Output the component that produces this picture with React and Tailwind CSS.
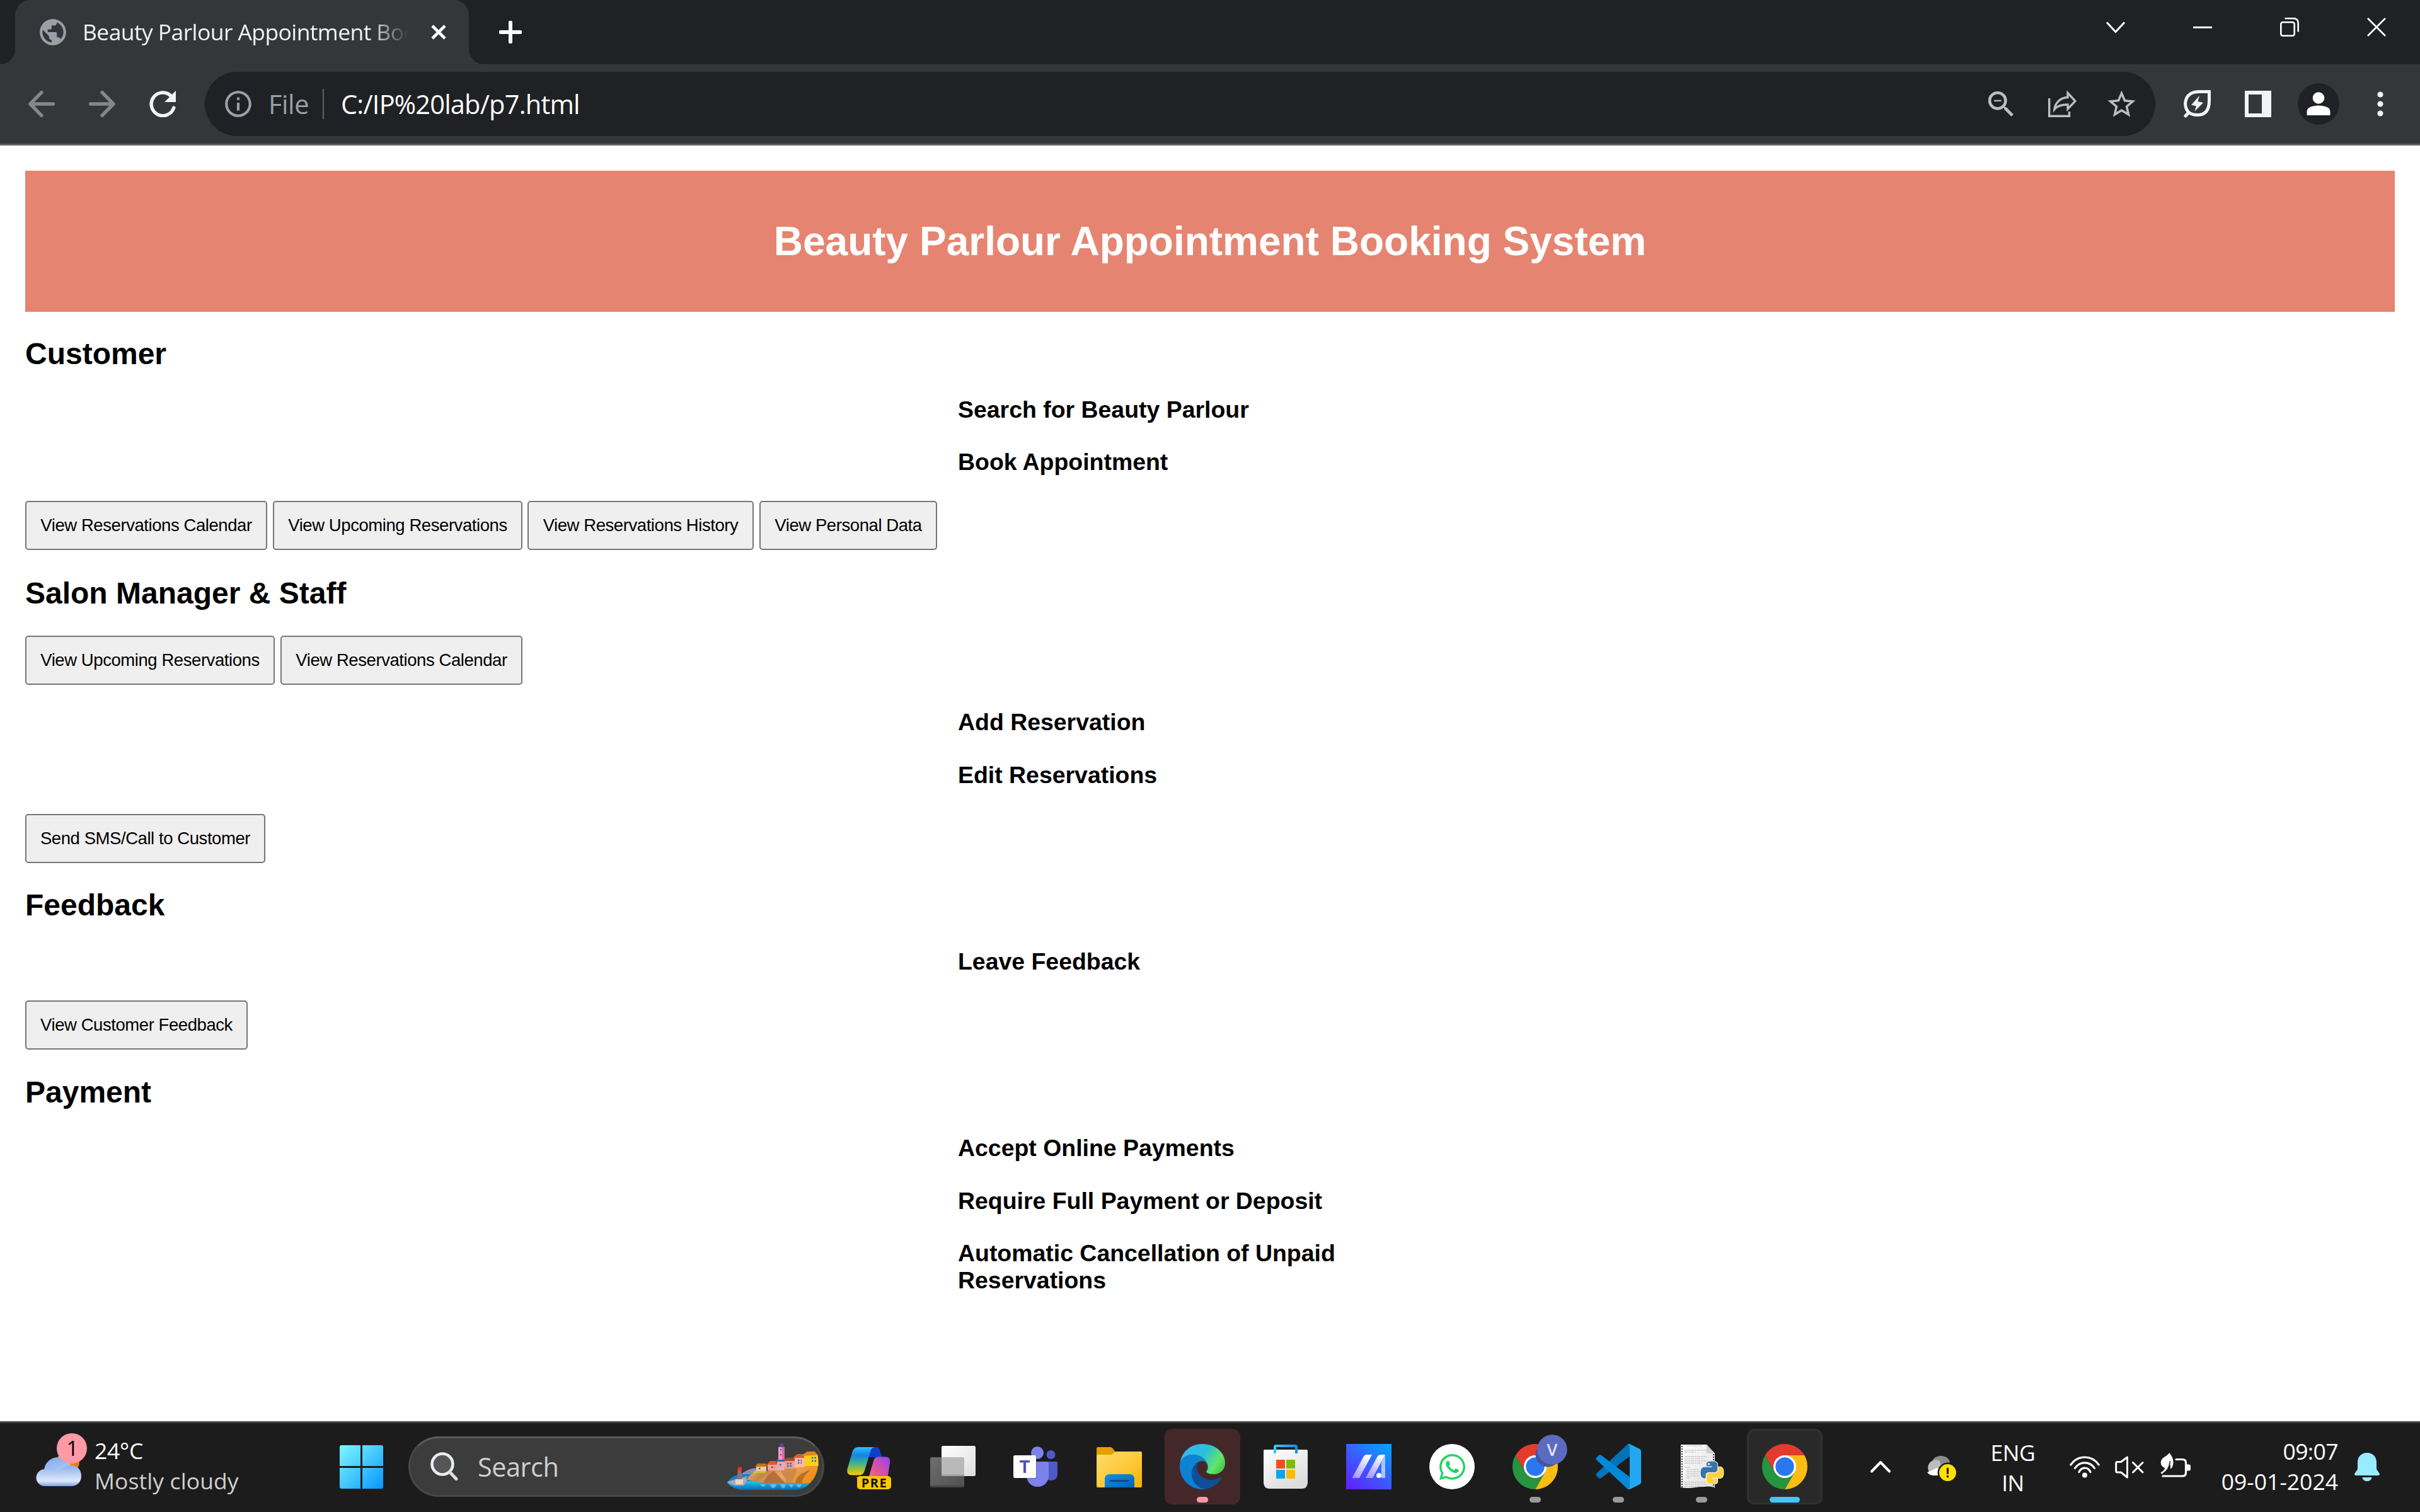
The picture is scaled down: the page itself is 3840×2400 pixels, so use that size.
import React from "react";
import {
  MdPublic,
  MdInfoOutline,
  MdZoomOut,
  MdStarOutline,
} from "react-icons/md";
import { FaWhatsapp } from "react-icons/fa";

/* ---------- Browser chrome ---------- */

function TabStrip() {
  return (
    <div className="flex h-[102px] w-full shrink-0 bg-[#202124]">
      <div className="flex w-[24px] items-end bg-[#202124]">
        <div className="h-[24px] w-[24px] bg-[#35363a]">
          <div className="h-full w-full rounded-br-[24px] bg-[#202124]" />
        </div>
      </div>
      <div className="flex h-full w-[720px] items-center rounded-t-[24px] bg-[#35363a]">
        <MdPublic className="ml-[35px] shrink-0 text-[#9aa0a6]" size={50} />
        <div className="-mt-[2px] ml-[22px] w-[517px] overflow-hidden whitespace-nowrap text-[35.5px] leading-[48px] tracking-[-0.6px] text-[#f1f3f4] [mask-image:linear-gradient(to_right,#000_88%,transparent_100%)]">
          Beauty Parlour Appointment Booking
        </div>
        <svg className="ml-[35px] shrink-0" width="26" height="26" viewBox="0 0 26 26">
          <path d="M3 3L23 23M23 3L3 23" stroke="#fff" strokeWidth="4.6" strokeLinecap="butt" />
        </svg>
      </div>
      <div className="flex w-[24px] items-end">
        <div className="h-[24px] w-[24px] bg-[#35363a]">
          <div className="h-full w-full rounded-bl-[24px] bg-[#202124]" />
        </div>
      </div>
      <div className="flex flex-1 items-center">
        <svg className="ml-[24px]" width="36" height="36" viewBox="0 0 36 36">
          <path d="M18 2.5V33.500M2.500 18H33.500" stroke="#fff" strokeWidth="6" strokeLinecap="round" />
        </svg>
      </div>
      <div className="flex items-start gap-[108px] pr-[54px] pt-[28px]">
        <svg width="30" height="30" viewBox="0 0 30 30" fill="none" stroke="#fff" strokeWidth="3">
          <path d="M1 7.500L15 22.500L29 7.500" />
        </svg>
        <svg width="30" height="30" viewBox="0 0 30 30">
          <path d="M0 15.500H30" stroke="#fff" strokeWidth="3" />
        </svg>
        <svg width="30" height="30" viewBox="0 0 30 30" fill="none" stroke="#fff" strokeWidth="2.600">
          <rect x="1.300" y="7.300" width="21.400" height="21.400" rx="3" />
          <path d="M7.500 1.300H21C26 1.300 28.700 4 28.700 9V22.500" />
        </svg>
        <svg width="30" height="30" viewBox="0 0 30 30">
          <path d="M1 1L29 29M29 1L1 29" stroke="#fff" strokeWidth="2.600" />
        </svg>
      </div>
    </div>
  );
}

function Toolbar() {
  return (
    <div className="flex h-[129px] w-full shrink-0 items-center border-b-[3px] border-[#5f6064] bg-[#35363a]">
      <svg className="ml-[45px] shrink-0" width="42" height="42" viewBox="0 0 42 42" fill="none" stroke="#86878a" strokeWidth="5.400" strokeLinecap="round" strokeLinejoin="round">
        <path d="M39.500 21H4M21 2.700L3 21L21 39.300" />
      </svg>
      <svg className="ml-[54px] shrink-0" width="42" height="42" viewBox="0 0 42 42" fill="none" stroke="#86878a" strokeWidth="5.400" strokeLinecap="round" strokeLinejoin="round">
        <path d="M2.500 21H38M21 2.700L39 21L21 39.300" />
      </svg>
      <svg className="ml-[54px] shrink-0" width="42" height="42" viewBox="0 0 42 42">
        <path d="M38.800 27A18.300 18.300 0 1 1 34.500 8.500" fill="none" stroke="#f1f3f4" strokeWidth="5.400" strokeLinecap="round" />
        <path d="M42 0V18H24Z" fill="#f1f3f4" />
      </svg>
      <div className="ml-[46px] flex h-[102px] w-[3095px] shrink-0 items-center rounded-full bg-[#202124]">
        <MdInfoOutline className="ml-[28px] shrink-0 text-[#9aa0a6]" size={50} />
        <div className="-mt-[1px] ml-[23px] w-[86px] whitespace-nowrap text-[41.5px] leading-[56px] tracking-[-0.4px] text-[#9aa0a6]">File</div>
        <div className="h-[48px] w-[2px] bg-[#5f6368]" />
        <div className="-mt-[1px] ml-[27px] whitespace-nowrap text-[41.5px] leading-[56px] tracking-[-0.8px] text-white">C:/IP%20lab/p7.html</div>
        <div className="ml-auto flex items-center pr-[27px] text-[#bdbdbd]">
          <MdZoomOut size={55} />
          <svg className="ml-[47px]" width="45" height="42" viewBox="0 0 45 42" fill="none" stroke="#bdbdbd" strokeWidth="3.400">
            <path d="M1.700 12V40.300H33.500V33" />
            <path d="M31 3.500L43 16.500L31 29V22C22 22 14 24.500 10 29.500C11 19.500 19 11 31 10.500Z" />
          </svg>
          <MdStarOutline className="ml-[45px]" size={53} />
        </div>
      </div>
      <svg className="ml-[45px] shrink-0" width="44" height="44" viewBox="0 0 44 44" fill="none">
        <path d="M3 41L8 35.500M8 35.500C3 30 2 24 3 18C5 7 14 2.600 25 2.600H40.500V17C40.500 28 37 39.500 22 39.500C16 39.500 11.500 38 8 35.500Z" stroke="#f1f3f4" strokeWidth="5" strokeLinecap="round" />
        <path d="M25 9L12 23.500L20 25.500L17.500 33.500L31 20L22.500 18Z" fill="#f1f3f4" />
      </svg>
      <svg className="ml-[53px] shrink-0" width="42" height="42" viewBox="0 0 42 42">
        <path fillRule="evenodd" d="M0 0H42V42H0ZM6 6V36H27V6Z" fill="#f1f3f4" />
      </svg>
      <div className="ml-[42px] flex h-[66px] w-[66px] shrink-0 items-center justify-center rounded-full bg-[#202124]">
        <svg width="38" height="38" viewBox="0 0 38 38" fill="#fff">
          <circle cx="19" cy="9.500" r="9.300" />
          <path d="M0.500 37V31C0.500 25 8 21.500 19 21.500S37.500 25 37.500 31V37Z" />
        </svg>
      </div>
      <svg className="ml-[60px] shrink-0" width="10" height="40" viewBox="0 0 10 40" fill="#f1f3f4">
        <circle cx="5" cy="5" r="4.600" />
        <circle cx="5" cy="20" r="4.600" />
        <circle cx="5" cy="35" r="4.600" />
      </svg>
    </div>
  );
}

/* ---------- Page ---------- */

function PageButton({ children, className }) {
  return (
    <button
      className={
        "flex h-[78px] shrink-0 items-center justify-center whitespace-nowrap rounded-[5px] border-2 border-[#767676] bg-[#efefef] pb-[1px] text-[27.5px] leading-[30px] tracking-[-0.43px] text-black " +
        className
      }
    >
      {children}
    </button>
  );
}

function Heading({ children, className }) {
  return <h2 className={"text-[48px] font-bold leading-[55px] text-black " + className}>{children}</h2>;
}

function Option({ children, className }) {
  return (
    <h3 className={"mx-auto w-[800px] text-[37.44px] font-bold leading-[43px] text-black " + className}>
      {children}
    </h3>
  );
}

function Page() {
  return (
    <main className="flex h-[2025px] w-full shrink-0 flex-col bg-white px-[40px] pt-[40px] font-['Liberation_Sans',Arial,sans-serif]">
      <header className="flex h-[224px] shrink-0 items-center justify-center bg-[#e58571]">
        <h1 className="text-[64px] font-bold leading-[74px] text-white">Beauty Parlour Appointment Booking System</h1>
      </header>

      <Heading className="mt-[39px]">Customer</Heading>
      <Option className="mt-[40px]">Search for Beauty Parlour</Option>
      <Option className="mt-[40px]">Book Appointment</Option>
      <div className="mt-[40px] flex">
        <PageButton className="w-[384px]">View Reservations Calendar</PageButton>
        <PageButton className="ml-[9px] w-[396px]">View Upcoming Reservations</PageButton>
        <PageButton className="ml-[8px] w-[359px]">View Reservations History</PageButton>
        <PageButton className="ml-[9px] w-[282px]">View Personal Data</PageButton>
      </div>

      <Heading className="mt-[41px]">Salon Manager &amp; Staff</Heading>
      <div className="mt-[40px] flex">
        <PageButton className="w-[396px]">View Upcoming Reservations</PageButton>
        <PageButton className="ml-[9px] w-[384px]">View Reservations Calendar</PageButton>
      </div>
      <Option className="mt-[38px]">Add Reservation</Option>
      <Option className="mt-[41px]">Edit Reservations</Option>
      <div className="mt-[40px] flex">
        <PageButton className="w-[381px]">Send SMS/Call to Customer</PageButton>
      </div>

      <Heading className="mt-[39px]">Feedback</Heading>
      <Option className="mt-[41px]">Leave Feedback</Option>
      <div className="mt-[40px] flex">
        <PageButton className="w-[353px]">View Customer Feedback</PageButton>
      </div>

      <Heading className="mt-[40px]">Payment</Heading>
      <Option className="mt-[40px]">Accept Online Payments</Option>
      <Option className="mt-[41px]">Require Full Payment or Deposit</Option>
      <Option className="mt-[40px]">Automatic Cancellation of Unpaid Reservations</Option>
    </main>
  );
}

/* ---------- Taskbar icons, each on a 72 x 72 grid ---------- */

function Icon72({ children }) {
  return (
    <svg className="block overflow-visible" width="72" height="72" viewBox="0 0 72 72">
      {children}
    </svg>
  );
}

function CopilotIcon() {
  return (
    <Icon72>
      <defs>
        <linearGradient id="cpA" x1="0" y1="0" x2="0" y2="1">
          <stop offset="0" stopColor="#2fc0fb" />
          <stop offset="0.3" stopColor="#1683e0" />
          <stop offset="0.58" stopColor="#3fb48c" />
          <stop offset="0.8" stopColor="#a3bf33" />
          <stop offset="1" stopColor="#ffc80a" />
        </linearGradient>
        <linearGradient id="cpB" x1="1" y1="0" x2="0" y2="1">
          <stop offset="0" stopColor="#9045f5" />
          <stop offset="0.5" stopColor="#e0529c" />
          <stop offset="1" stopColor="#ff8a5c" />
        </linearGradient>
      </defs>
      <path d="M38 5H46C50 5 51.500 7 52.500 11L54 16C55 19 56 20.500 58 21H34Z" fill="#0f3fc9" />
      <path d="M12 52.500C16 52.500 17.500 55 19 60C21 65 24 66 30 66H36L38 52.500Z" fill="#ff6a4d" />
      <path d="M50 20.500H62C67 20.500 69 25 68 30L64 56C62 62 60 66 54 66H30L36 48L42 27C43 22.500 46 20.500 50 20.500Z" fill="url(#cpB)" />
      <path d="M18 5H45C40 5 38 8 36.500 14L28 42C26.500 47 24 49.500 19 49.500H8C1 49.500 -1 45 1 38L8 14C10 8 13 5 18 5Z" fill="url(#cpA)" />
      <rect x="16" y="51" width="54" height="21" rx="5" fill="#ffc700" />
      <text x="43.500" y="68.500" textAnchor="middle" fontFamily="'Open Sans', sans-serif" fontWeight="700" fontSize="20" letterSpacing="1.500" fill="#111">PRE</text>
    </Icon72>
  );
}

function TaskViewIcon() {
  return (
    <Icon72>
      <defs>
        <linearGradient id="tvA" x1="0" y1="0" x2="1" y2="1">
          <stop offset="0" stopColor="#ffffff" />
          <stop offset="1" stopColor="#dddddd" />
        </linearGradient>
        <linearGradient id="tvB" x1="0" y1="0" x2="1" y2="1">
          <stop offset="0" stopColor="#6e6e6e" />
          <stop offset="1" stopColor="#505050" />
        </linearGradient>
      </defs>
      <rect x="0" y="21" width="54" height="48" rx="2.500" fill="url(#tvB)" />
      <rect x="18" y="3" width="54" height="48" rx="2.500" fill="url(#tvA)" />
      <path d="M18 21H52Q54 21 54 23V51H20Q18 51 18 49Z" fill="#b9b9b9" />
      <path d="M18 48H54V51H20Q18 51 18 48Z" fill="#a6a6a6" />
      <path d="M0 66H54Q54 69 52 69H2Q0 69 0 66Z" fill="#454545" />
    </Icon72>
  );
}

function TeamsIcon() {
  return (
    <Icon72>
      <circle cx="59.500" cy="17" r="7" fill="#5059c9" />
      <path d="M50 28H68Q70 28 70 30V48C70 54 66 58 60 58C55 58 50 55 50 48Z" fill="#5059c9" />
      <circle cx="38" cy="14" r="10" fill="#7b83eb" />
      <path d="M21 28H54Q56 28 56 30V50C56 61 48 68 38.500 68C29 68 21 61 21 50Z" fill="#7b83eb" />
      <rect x="1" y="19" width="36" height="36" rx="2.500" fill="#2f3270" opacity="0.4" />
      <rect x="0" y="18" width="36" height="36" rx="2.500" fill="#fff" />
      <path d="M10 26H26V29.500H20V46H16V29.500H10Z" fill="#4b53bc" />
    </Icon72>
  );
}

function FolderIcon() {
  return (
    <Icon72>
      <defs>
        <linearGradient id="foA" x1="0" y1="0" x2="1" y2="1">
          <stop offset="0" stopColor="#ffdb6b" />
          <stop offset="0.6" stopColor="#fdc735" />
          <stop offset="1" stopColor="#f2b200" />
        </linearGradient>
        <linearGradient id="foB" x1="0" y1="0" x2="1" y2="1">
          <stop offset="0" stopColor="#1590e0" />
          <stop offset="1" stopColor="#0063b8" />
        </linearGradient>
      </defs>
      <path d="M2 5H22C24 5 26 7 30 13V24H0V7Q0 5 2 5Z" fill="#e0a000" />
      <path d="M0 19Q0 17 2 17H23C26 17 28 12 31 12H70Q72 12 72 14V67Q72 69 70 69H2Q0 69 0 67Z" fill="url(#foA)" />
      <path d="M13 69V56Q13 48 21 48H52Q60 48 60 56V69Z" fill="url(#foB)" />
      <path d="M22 58.500H50" stroke="#064a8c" strokeWidth="3" strokeLinecap="round" />
    </Icon72>
  );
}

function EdgeIcon() {
  return (
    <Icon72>
      <defs>
        <linearGradient id="edA" x1="0" y1="0.3" x2="1" y2="0.75">
          <stop offset="0" stopColor="#38b8fb" />
          <stop offset="0.45" stopColor="#28bfd8" />
          <stop offset="0.8" stopColor="#62e56c" />
          <stop offset="1" stopColor="#44c648" />
        </linearGradient>
        <linearGradient id="edB" x1="0.7" y1="0" x2="0.2" y2="1">
          <stop offset="0" stopColor="#0f86cf" />
          <stop offset="1" stopColor="#0a7edb" />
        </linearGradient>
        <linearGradient id="edC" x1="0" y1="0" x2="1" y2="1">
          <stop offset="0" stopColor="#0c4f9e" />
          <stop offset="1" stopColor="#0f4f92" />
        </linearGradient>
      </defs>
      <path d="M0.300 32C2 13 17 0 36 0C57 0 72 14 72 30C72 41 64 48 54 48C45 48 41 45 42.500 43C45 40 45 37 44 33C42 24 33 17 20 17C9 17 1.500 24 0.300 32Z" fill="url(#edA)" />
      <path d="M0 36C0 24 9 17 20 17C33 17 42 24 44 34C42 29 39 27 36 27C28 27 19 35 19 46C19 60 29 70.500 41 71.700A36 36 0 0 1 0 36Z" fill="url(#edB)" />
      <path d="M30 28.500C23 32 19 39 19 46C19 60 29 70.500 41 71.700C52 70 62 62 66.500 54C67 52.500 66 52 65 52.700C61 55.500 56 57 50 57C37 57 27 48 27 37.500C27 34 28 31 30 28.500Z" fill="url(#edC)" />
    </Icon72>
  );
}

function StoreIcon() {
  return (
    <Icon72>
      <defs>
        <linearGradient id="stA" x1="0" y1="0" x2="0.6" y2="1">
          <stop offset="0" stopColor="#ffffff" />
          <stop offset="1" stopColor="#dcdcdc" />
        </linearGradient>
        <linearGradient id="stB" x1="0" y1="0" x2="1" y2="0">
          <stop offset="0" stopColor="#35c7f5" />
          <stop offset="1" stopColor="#1391e0" />
        </linearGradient>
      </defs>
      <path d="M1 11Q1 9 3 9H69Q71 9 71 11V61Q71 71 61 71H11Q1 71 1 61Z" fill="url(#stA)" />
      <path d="M19 15V5Q19 3 21 3H51Q53 3 53 5V15" fill="none" stroke="url(#stB)" strokeWidth="4.200" />
      <rect x="21" y="25" width="14" height="14" fill="#f34f1c" />
      <rect x="37" y="25" width="14" height="14" fill="#7fbc00" />
      <rect x="21" y="41" width="14" height="14" fill="#01a6f0" />
      <rect x="37" y="41" width="14" height="14" fill="#ffba01" />
    </Icon72>
  );
}

function MyAsusIcon() {
  return (
    <Icon72>
      <defs>
        <linearGradient id="asA" x1="0.1" y1="1" x2="0.9" y2="0">
          <stop offset="0" stopColor="#6120ff" />
          <stop offset="0.5" stopColor="#3a5dff" />
          <stop offset="1" stopColor="#05a3ff" />
        </linearGradient>
        <linearGradient id="asB" x1="0.7" y1="0" x2="0.3" y2="1">
          <stop offset="0" stopColor="#ffffff" />
          <stop offset="1" stopColor="#a99bff" />
        </linearGradient>
      </defs>
      <rect width="72" height="72" fill="url(#asA)" />
      <path d="M32 17H41L21 54H9.500L28 19.500Q29.500 17 32 17Z" fill="url(#asB)" />
      <path d="M55 17H62L42 54H31L50 19.500Q51.500 17 55 17Z" fill="url(#asB)" />
      <path d="M62 17V54H56V29Z" fill="#a9c3ff" />
      <circle cx="52" cy="50" r="4" fill="#fff" />
    </Icon72>
  );
}

function WhatsAppIcon() {
  return (
    <div className="flex h-[72px] w-[72px] items-center justify-center rounded-full bg-white">
      <FaWhatsapp size={47} className="text-[#25d366]" />
    </div>
  );
}

function ChromeShapes() {
  return (
    <>
      <path d="M20.410 45L4.820 18A36 36 0 0 1 67.180 18H36Z" fill="#e33b2e" />
      <path d="M36 18H67.180A36 36 0 0 1 36 72L51.590 45Z" fill="#fbbc14" />
      <path d="M51.590 45L36 72A36 36 0 0 1 4.820 18L20.410 45Z" fill="#26953f" />
      <circle cx="36" cy="36" r="18" fill="#fff" />
      <circle cx="36" cy="36" r="14.700" fill="#2b78ee" />
    </>
  );
}

function ChromeIcon() {
  return (
    <Icon72>
      <ChromeShapes />
    </Icon72>
  );
}

function ChromeProfileIcon() {
  return (
    <Icon72>
      <ChromeShapes />
      <circle cx="56" cy="17" r="19.500" fill="#4453a5" />
      <circle cx="63" cy="9" r="23.800" fill="#5c6bc0" />
      <text x="63" y="19" textAnchor="middle" fontFamily="'Open Sans', sans-serif" fontWeight="600" fontSize="27" fill="#dfe3f5">V</text>
    </Icon72>
  );
}

function VsCodeIcon() {
  return (
    <Icon72>
      <path d="M1.500 46.500Q-1 49 1.500 51L5 54.200Q6.800 55.500 9 54L54 19.500V1L50 1Z" fill="#0273b8" />
      <path d="M1.500 21.500L5 18Q6.800 16.500 9 18L54 52.500V71L50 71L1.500 25.500Q-1 23.500 1.500 21.500Z" fill="#0588d8" />
      <path d="M50 71C52 72.500 54 72 56 71L70 64Q72 63 72 60.500V11.500Q72 9 70 8L56 1C54 0 52 -0.500 50 1C52 0.800 54 2 54 4V68C54 70 52 71.500 50 71Z" fill="#24a7f2" />
    </Icon72>
  );
}

const PY_HALF =
  "M14.25.18l.9.2.73.26.59.3.45.32.34.34.25.34.16.33.1.3.04.26.02.2-.01.13V8.500l-.05.63-.13.55-.21.46-.26.38-.3.31-.33.25-.35.19-.35.14-.33.1-.3.07-.26.04-.21.02H8.770l-.69.05-.59.14-.5.22-.41.27-.33.32-.27.35-.2.36-.15.37-.1.35-.07.32-.04.27-.02.21v3.060H3.170l-.21-.03-.28-.07-.32-.12-.35-.18-.36-.26-.36-.36-.35-.46-.32-.59-.28-.73-.21-.88-.14-1.050-.05-1.230.06-1.220.16-1.040.24-.87.32-.71.36-.57.4-.44.42-.33.42-.24.4-.16.36-.1.32-.05.24-.01h.16l.06.01h8.160v-.83H6.180l-.01-2.750-.02-.37.05-.34.11-.31.17-.28.25-.26.31-.23.38-.2.44-.18.51-.15.58-.12.64-.1.71-.06.77-.04.84-.02 1.270.05zm-6.300 1.980l-.23.33-.08.41.08.41.23.34.33.22.41.09.41-.09.33-.22.23-.34.08-.41-.08-.41-.23-.33-.33-.22-.41-.09-.41.09z";

function PythonFileIcon() {
  const lines = [
    [10, 3, 24], [6, 10, 36], [6, 13, 18], [6, 20, 36], [6, 23.500, 31], [6, 27, 38], [6, 30.500, 28],
    [6, 37, 10], [9, 40.500, 20], [9, 44, 22], [9, 47.500, 20], [9, 51, 21], [9, 54, 6],
    [6, 60.500, 38], [6, 64, 42], [6, 67.500, 30],
  ];
  return (
    <Icon72>
      <defs>
        <linearGradient id="pyP" x1="0" y1="0" x2="1" y2="1">
          <stop offset="0" stopColor="#ffffff" />
          <stop offset="1" stopColor="#dedede" />
        </linearGradient>
      </defs>
      <path d="M3 1H44L57 15V70C50 66 44 68 36 68C26 68 18 72 3 69Z" fill="url(#pyP)" />
      <path d="M44 1L57 15H46Q44 15 44 13Z" fill="#cfcfcf" />
      <path d="M5 3V69M55 16V69" stroke="#3c3c3c" strokeWidth="2" strokeDasharray="2 2" />
      {lines.map(([x, y, w], i) => (
        <path key={i} d={`M${x + 3} ${y}h${w}`} stroke="#cacaca" strokeWidth="1.500" strokeDasharray="5 1 3 1" />
      ))}
      <g transform="translate(34.500 27.500) scale(1.500)">
        <path d={PY_HALF} fill="#fff" stroke="#fff" strokeWidth="1.200" />
        <path d={PY_HALF} fill="#fff" stroke="#fff" strokeWidth="1.200" transform="rotate(180 12 12)" />
        <path d={PY_HALF} fill="#3a74a6" />
        <path d={PY_HALF} fill="#ffd03f" transform="rotate(180 12 12)" />
      </g>
    </Icon72>
  );
}

function WeatherIcon() {
  return (
    <svg className="block overflow-visible" width="84" height="84" viewBox="0 0 84 84">
      <defs>
        <linearGradient id="wcA" x1="0" y1="0" x2="0.3" y2="1">
          <stop offset="0" stopColor="#7ea6ef" />
          <stop offset="1" stopColor="#cbdcf6" />
        </linearGradient>
        <linearGradient id="wcB" x1="0" y1="0" x2="0" y2="1">
          <stop offset="0" stopColor="#8db0ee" />
          <stop offset="0.75" stopColor="#dce9fb" />
          <stop offset="1" stopColor="#7e9fe0" />
        </linearGradient>
        <linearGradient id="wcS" x1="0" y1="0" x2="1" y2="1">
          <stop offset="0" stopColor="#ffd21f" />
          <stop offset="1" stopColor="#ea5a0c" />
        </linearGradient>
      </defs>
      <circle cx="51" cy="46" r="18" fill="url(#wcS)" />
      <circle cx="35" cy="60" r="22" fill="url(#wcA)" />
      <path d="M14 84A13.500 13.500 0 0 1 14 57C21 55 30 58 34 65C38 58 44 51 55 51C66 51 72 58 72 67.500C72 77 66 84 56 84Z" fill="url(#wcB)" />
      <circle cx="57" cy="24" r="24" fill="#ff99a4" />
      <text x="58" y="36" textAnchor="middle" fontFamily="'Open Sans', sans-serif" fontSize="33" fill="#000">1</text>
    </svg>
  );
}

function StartIcon() {
  return (
    <svg className="block" width="69" height="69" viewBox="0 0 69 69">
      <defs>
        <linearGradient id="wiA" gradientUnits="userSpaceOnUse" x1="0" y1="0" x2="69" y2="69">
          <stop offset="0" stopColor="#7df8ff" />
          <stop offset="0.5" stopColor="#45c8ff" />
          <stop offset="1" stopColor="#0894ff" />
        </linearGradient>
      </defs>
      <path d="M3 0H33V33H0V3Q0 0 3 0ZM36 0H66Q69 0 69 3V33H36ZM0 36H33V69H3Q0 69 0 66ZM36 36H69V66Q69 69 66 69H36Z" fill="url(#wiA)" />
    </svg>
  );
}

function HarbourArt() {
  return (
    <svg className="block overflow-visible" width="145" height="74" viewBox="0 0 145 74">
      <defs>
        <clipPath id="hbClip">
          <path d="M0 62C6 52 16 40 30 30L60 0H120L143 14C146 30 145 50 132 62C126 70 118 74 106 74H28C14 74 4 68 0 62Z" />
        </clipPath>
        <linearGradient id="hbSea" x1="0" y1="0" x2="0" y2="1">
          <stop offset="0" stopColor="#25cbe6" />
          <stop offset="1" stopColor="#0568b8" />
        </linearGradient>
        <linearGradient id="hbRock" x1="0" y1="0" x2="1" y2="0.3">
          <stop offset="0" stopColor="#f8d29c" />
          <stop offset="0.35" stopColor="#c98247" />
          <stop offset="0.6" stopColor="#e6a668" />
          <stop offset="1" stopColor="#f28f1c" />
        </linearGradient>
      </defs>
      <g clipPath="url(#hbClip)">
        <path d="M0 62C8 50 20 46 50 50V74H0Z" fill="#0e84c9" />
        <path d="M22 49C30 43 40 38 48 40L42 49Z" fill="#8c8cb8" />
        <path d="M0 62C6 58 18 56 32 52L28 64L12 68Z" fill="#a99cc0" />
        <rect x="0" y="60" width="145" height="14" fill="url(#hbSea)" />
        <path d="M0 62L12 67H26L32 58L24 54Z" fill="#b2a3bd" />
        <path d="M31 58C36 48 44 44 60 44L145 32V63H57Z" fill="url(#hbRock)" />
        <path d="M57 63C60 55 66 48 74 44L92 63Z" fill="#b3703a" />
        <path d="M92 63C98 54 82 50 86 40H110C112 50 102 55 104 63Z" fill="#cf8a4b" />
        <path d="M108 63C108 52 120 46 132 42C122 52 120 56 118 63Z" fill="#b8702a" />
        <path d="M40 47C42 42 50 41 62 43L60 47Z" fill="#b9cf1f" />
      </g>
      <path d="M46 36H62V44H46Z" fill="#f8c6a3" />
      <path d="M44 37L48 32H61L64 37Z" fill="#c4711d" />
      <path d="M64 33H79V43H64Z" fill="#f9a18f" />
      <path d="M62 34L68 28H77L80 34Z" fill="#dd5a31" />
      <path d="M79 27H91V43H79Z" fill="#e7a8b4" />
      <path d="M76 29L80 25H90L92 29Z" fill="#3266b0" />
      <path d="M81 6H91V26H81Z" fill="#f29ac0" />
      <path d="M87 6H91V26H87Z" fill="#d86ba1" />
      <path d="M82.500 6V2L86 -1L89.500 2V6Z" fill="#5a44a3" />
      <path d="M91 28H107V40H91Z" fill="#ef9b93" />
      <path d="M89 28L94 23H107V28Z" fill="#a84e2b" />
      <path d="M107 22H122V38H107Z" fill="#ffb8a8" />
      <path d="M104 23L111 17H123V23Z" fill="#e0592c" />
      <path d="M122 17H143Q145 25 144.500 36H122Z" fill="#ffcf1c" />
      <path d="M117 20L127 13H139L143 19Z" fill="#e08a1f" />
      <path d="M84 10H86M84 18H86M50 40H53M70 38H75M83 34H87M95 32H104M95 36H104M112 27H118M112 31H118M134 23H142M134 28H142" stroke="#2a6aa5" strokeWidth="2.400" strokeDasharray="2.500 2" />
      <path d="M17 40H22L23.500 57H15.500Z" fill="#8e6e78" />
      <path d="M16.500 38H23V43H16.500Z" fill="#f22a1e" />
      <path d="M17.500 38V34H22V38Z" fill="#5a3743" />
      <path d="M13 57H25V65H13Z" fill="#e9d6c4" />
      <path d="M52 65Q57 72 61 65M68 65Q73 78 78 65M84 65Q89 78 93 65M98 65Q102 75 105 65M109 65Q114 75 118 65" fill="#9fd6e3" opacity="0.600" />
    </svg>
  );
}

/* ---------- Taskbar ---------- */

function TaskItem({ children, className = "", indicator }) {
  return (
    <div className={"relative flex h-[120px] w-[120px] shrink-0 items-center justify-center rounded-[12px] " + className}>
      {children}
      {indicator && <span className={"absolute bottom-[3px] left-1/2 h-[9px] -translate-x-1/2 rounded-full " + indicator} />}
    </div>
  );
}

function Tray() {
  return (
    <div className="ml-auto flex h-full items-center text-white">
      <svg className="-mt-[3px] shrink-0" width="32" height="20" viewBox="0 0 32 20">
        <path d="M2 17.500L16 3L30 17.500" fill="none" stroke="#fff" strokeWidth="4" strokeLinecap="round" strokeLinejoin="round" />
      </svg>
      <svg className="ml-[56px] mt-[2px] shrink-0" width="48" height="42" viewBox="0 0 48 42">
        <path d="M10 10C12 3 18 1 24 1C31 1 37 5 38 11L26 24Z" fill="#8c8c8c" />
        <path d="M13 32A12.500 12.500 0 1 1 22 9L26 20L16 32Z" fill="#bdbdbd" />
        <path d="M2 27L18 20H26V32H13C8 32 4 30 2 27Z" fill="#fff" />
        <circle cx="34.500" cy="27.500" r="16" fill="#1c1c1c" />
        <circle cx="34.500" cy="27.500" r="13.500" fill="#fce100" />
        <path d="M34.500 21V28.500M34.500 33.200V34" stroke="#1c1c1c" strokeWidth="3.200" strokeLinecap="round" />
      </svg>
      <div className="-mt-[1px] ml-[48px] w-[84px] text-center text-[35.5px] leading-[48px] tracking-[-0.5px]">
        <div>ENG</div>
        <div>IN</div>
      </div>
      <svg className="-mt-[2px] ml-[48px] shrink-0" width="48" height="36" viewBox="0 0 48 36" fill="none" stroke="#fff" strokeWidth="3.200" strokeLinecap="round">
        <path d="M1.800 14C13-2 35-2 46.200 14" />
        <path d="M8.500 19.500C16 8 32 8 39.500 19.500" />
        <path d="M15 25.500C19 17 29 17 33 25.500" />
        <circle cx="24" cy="30.500" r="4" fill="#fff" stroke="none" />
      </svg>
      <svg className="-mt-[2px] ml-[24px] shrink-0" width="46" height="36" viewBox="0 0 46 36" fill="none" stroke="#fff" strokeWidth="3" strokeLinejoin="round" strokeLinecap="round">
        <path d="M1.700 11.500Q1.700 9.500 4 9.500H9.500L19.500 2V34L9.500 26H4Q1.700 26 1.700 24Z" />
        <path d="M28.500 10.500L44 26M44 10.500L28.500 26" />
      </svg>
      <svg className="mb-[8px] ml-[26px] shrink-0" width="48" height="40" viewBox="0 0 48 40">
        <path d="M25 10.500H35Q40.500 10.500 40.500 16V31.500Q40.500 37 35 37H4" fill="none" stroke="#fff" strokeWidth="3.200" strokeLinecap="round" />
        <path d="M42 18.500H45Q48 18.500 48 21V26Q48 28.500 45 28.500H42Z" fill="#fff" />
        <path d="M14.500 0C18 5 21 10 20.500 16C20 22 18 25 16 25.500C16 21 15.500 18 15 15C14.500 22 12 29 3 33.500C0 33 0.500 31 2 30.500C6 28 7 26 7 24C1 22 0 16 1 13C3 7 10 6 14.500 0Z" fill="#fff" />
        <path d="M15.500 13C14.500 22 12 29 4 33" stroke="#1c1c1c" strokeWidth="1.500" fill="none" />
      </svg>
      <div className="-mt-[6px] ml-[34px] w-[200px] whitespace-nowrap text-right text-[35.5px] leading-[48px] tracking-[0px]">
        <div className="tracking-[-0.6px]">09:07</div>
        <div>09-01-2024</div>
      </div>
      <svg className="mb-[2px] ml-[26px] mr-[64px] shrink-0" width="40" height="45" viewBox="0 0 40 45" fill="#99ebff">
        <path d="M20 0C29 0 35 6.500 35 15V26L40 33.500Q40 36 37.500 36H2.500Q0 36 0 33.500L5 26V15C5 6.500 11 0 20 0Z" />
        <path d="M12.500 39H27.500C27 43 24 45 20 45S13 43 12.500 39Z" />
      </svg>
    </div>
  );
}

function Taskbar() {
  return (
    <footer className="flex h-[144px] w-full shrink-0 items-center border-t-[3px] border-[#404040] bg-[#1c1c1c]">
      <div className="flex h-full w-[482px] shrink-0 items-center pl-[57px]">
        <div className="-mt-[25px]">
          <WeatherIcon />
        </div>
        <div className="-mt-[7px] ml-[9px] whitespace-nowrap text-[35.5px] leading-[48px] text-white">
          <div className="tracking-[-0.3px]">24°C</div>
          <div className="tracking-[0.1px] text-[#cfcfcf]">Mostly cloudy</div>
        </div>
      </div>
      <div className="-mt-[2px] ml-[57px] shrink-0">
        <StartIcon />
      </div>
      <div className="-mt-[3px] ml-[40px] flex h-[96px] w-[660px] shrink-0 items-center rounded-full border-[3px] border-[#484848] border-t-[#5c5c5c] bg-[#3c3c3c]">
        <svg className="ml-[32px] shrink-0" width="44" height="46" viewBox="0 0 44 46">
          <circle cx="19" cy="19" r="16.500" fill="#565656" stroke="#e9edf2" strokeWidth="4.600" />
          <path d="M31 32L41 42.500" stroke="#d9dfe6" strokeWidth="5" strokeLinecap="round" />
        </svg>
        <div className="-mt-[1px] ml-[31px] text-[41.5px] leading-[56px] tracking-[-0.5px] text-[#cfcfcf]">Search</div>
        <div className="ml-auto mr-[6px]">
          <HarbourArt />
        </div>
      </div>
      <div className="-mt-[3px] ml-[12px] flex shrink-0 gap-[12px]">
        <TaskItem><CopilotIcon /></TaskItem>
        <TaskItem><TaskViewIcon /></TaskItem>
        <TaskItem><TeamsIcon /></TaskItem>
        <TaskItem><FolderIcon /></TaskItem>
        <TaskItem className="bg-[#442829]" indicator="w-[18px] bg-[#ff99a4]"><EdgeIcon /></TaskItem>
        <TaskItem><StoreIcon /></TaskItem>
        <TaskItem><MyAsusIcon /></TaskItem>
        <TaskItem><WhatsAppIcon /></TaskItem>
        <TaskItem indicator="w-[18px] bg-[#9a9a9a]"><ChromeProfileIcon /></TaskItem>
        <TaskItem indicator="w-[18px] bg-[#9a9a9a]"><VsCodeIcon /></TaskItem>
        <TaskItem indicator="w-[18px] bg-[#9a9a9a]"><PythonFileIcon /></TaskItem>
        <TaskItem className="bg-[#292929] shadow-[inset_0_0_0_3px_#313131]" indicator="w-[48px] bg-[#4cc2ff]"><ChromeIcon /></TaskItem>
      </div>
      <Tray />
    </footer>
  );
}

export default function App() {
  return (
    <div className="flex h-[2400px] w-[3840px] flex-col overflow-hidden bg-white font-['Open_Sans','Noto_Sans',sans-serif]">
      <TabStrip />
      <Toolbar />
      <Page />
      <Taskbar />
    </div>
  );
}
